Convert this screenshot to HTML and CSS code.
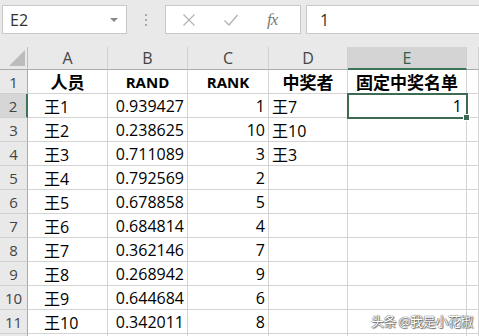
FILE: index.html
```html
<!DOCTYPE html>
<html>
<head>
<meta charset="utf-8">
<link rel="stylesheet" href="styles.css">
</head>
<body>
<div class="app">
  <div class="fbar">
    <div class="namebox"><span class="nb-text">E2</span><span class="nb-arrow"></span></div>
    <div class="dots"><i></i><i></i><i></i></div>
    <div class="btns">
      <svg class="ic-x" width="14" height="14" viewBox="0 0 14 14"><path d="M1.5 1.5 L12.5 12.5 M12.5 1.5 L1.5 12.5" stroke="#b4b4b4" stroke-width="1.3" fill="none"/></svg>
      <svg class="ic-ok" width="16" height="14" viewBox="0 0 16 14"><path d="M1.5 7.5 L6 12 L14.5 2" stroke="#b4b4b4" stroke-width="1.4" fill="none"/></svg>
      <span class="fx">fx</span>
    </div>
    <div class="formula">1</div>
  </div>
  <div class="sheet">
    <div class="corner"><span class="tri"></span></div>
    <div class="ch">A</div><div class="ch">B</div><div class="ch">C</div><div class="ch">D</div><div class="ch sel">E</div><div class="ch last"></div>

    <div class="rh">1</div>
    <div class="c hd zh">人员</div><div class="c hd">RAND</div><div class="c hd">RANK</div><div class="c hd zh">中奖者</div><div class="c hd zh">固定中奖名单</div><div class="c"></div>

    <div class="rh sel">2</div>
    <div class="c t">王1</div><div class="c n">0.939427</div><div class="c n">1</div><div class="c d">王7</div><div class="c n active">1</div><div class="c"></div>

    <div class="rh">3</div>
    <div class="c t">王2</div><div class="c n">0.238625</div><div class="c n">10</div><div class="c d">王10</div><div class="c"></div><div class="c"></div>

    <div class="rh">4</div>
    <div class="c t">王3</div><div class="c n">0.711089</div><div class="c n">3</div><div class="c d">王3</div><div class="c"></div><div class="c"></div>

    <div class="rh">5</div>
    <div class="c t">王4</div><div class="c n">0.792569</div><div class="c n">2</div><div class="c"></div><div class="c"></div><div class="c"></div>

    <div class="rh">6</div>
    <div class="c t">王5</div><div class="c n">0.678858</div><div class="c n">5</div><div class="c"></div><div class="c"></div><div class="c"></div>

    <div class="rh">7</div>
    <div class="c t">王6</div><div class="c n">0.684814</div><div class="c n">4</div><div class="c"></div><div class="c"></div><div class="c"></div>

    <div class="rh">8</div>
    <div class="c t">王7</div><div class="c n">0.362146</div><div class="c n">7</div><div class="c"></div><div class="c"></div><div class="c"></div>

    <div class="rh">9</div>
    <div class="c t">王8</div><div class="c n">0.268942</div><div class="c n">9</div><div class="c"></div><div class="c"></div><div class="c"></div>

    <div class="rh">10</div>
    <div class="c t">王9</div><div class="c n">0.644684</div><div class="c n">6</div><div class="c"></div><div class="c"></div><div class="c"></div>

    <div class="rh">11</div>
    <div class="c t">王10</div><div class="c n">0.342011</div><div class="c n">8</div><div class="c"></div><div class="c"></div><div class="c"></div>

    <div class="rh"></div>
    <div class="c"></div><div class="c"></div><div class="c"></div><div class="c"></div><div class="c"></div><div class="c"></div>
  </div>
  <div class="watermark">头条 @我是小花椒</div>
</div>
</body>
</html>
```

FILE: styles.css
```css
html, body {
  margin: 0;
  padding: 0;
  background: #ffffff;
}
body {
  font-family: "Open Sans", "Noto Sans CJK SC", sans-serif;
  color: #000;
  width: 479px;
  height: 336px;
  overflow: hidden;
}
.app {
  position: relative;
  width: 479px;
  height: 336px;
  overflow: hidden;
}
.fbar {
  height: 47px;
  background: #e9e9e9;
  display: flex;
  align-items: flex-start;
  padding-top: 5px;
  padding-left: 2px;
  box-sizing: border-box;
}
.namebox {
  width: 125px;
  height: 29px;
  box-sizing: border-box;
  border: 1px solid #c8c8c8;
  background: #fff;
  display: flex;
  align-items: center;
  padding-left: 7px;
  padding-right: 8px;
  justify-content: space-between;
}
.nb-text {
  font-size: 16px;
  color: #333;
}
.nb-arrow {
  width: 0;
  height: 0;
  border-left: 4px solid transparent;
  border-right: 4px solid transparent;
  border-top: 4px solid #888;
}
.dots {
  width: 38px;
  height: 29px;
  display: flex;
  flex-direction: column;
  align-items: center;
  justify-content: center;
  gap: 3px;
}
.dots i {
  display: block;
  width: 2px;
  height: 2px;
  background: #a9a9a9;
}
.btns {
  width: 136px;
  height: 29px;
  box-sizing: border-box;
  border: 1px solid #c8c8c8;
  background: #fff;
  display: flex;
  align-items: center;
  padding-left: 16px;
}
.ic-x { margin-right: 27px; }
.ic-ok { margin-right: 28px; }
.fx {
  font-family: "Liberation Serif", serif;
  font-style: italic;
  font-size: 17px;
  color: #7a7a7a;
  letter-spacing: -1px;
}
.formula {
  margin-left: 5px;
  flex: 1;
  height: 29px;
  box-sizing: border-box;
  border: 1px solid #c8c8c8;
  border-right: none;
  background: #fff;
  display: flex;
  align-items: center;
  padding-left: 13px;
  font-size: 16px;
  color: #333;
}
.sheet {
  display: grid;
  grid-template-columns: 28px 80px 80px 81px 79px 119px 12px;
  grid-template-rows: 23px repeat(12, 24px);
  font-size: 16px;
}
.corner {
  position: relative;
  background: #e9e9e9;
  border-right: 1px solid #bdbdbd;
  border-bottom: 1px solid #ababab;
  box-sizing: border-box;
}
.tri {
  position: absolute;
  right: 2px;
  bottom: 3px;
  width: 0;
  height: 0;
  border-left: 16px solid transparent;
  border-bottom: 16px solid #bcbcbc;
}
.ch {
  background: #e9e9e9;
  border-right: 1px solid #d0d0d0;
  border-bottom: 1px solid #ababab;
  box-sizing: border-box;
  display: flex;
  align-items: center;
  justify-content: center;
  color: #444;
  font-size: 16px;
}
.ch.sel {
  background: #d4d4d4;
  color: #2f6148;
  border-bottom: 2px solid #3d7458;
}
.rh {
  background: #e9e9e9;
  border-right: 1px solid #ababab;
  border-bottom: 1px solid #d0d0d0;
  box-sizing: border-box;
  display: flex;
  align-items: center;
  justify-content: center;
  color: #444;
  font-size: 15px;
}
.rh.sel {
  background: #d6d6d6;
  border-right: 2px solid #3d7458;
}
.c {
  border-right: 1px solid #d4d4d4;
  border-bottom: 1px solid #d4d4d4;
  box-sizing: border-box;
  display: flex;
  align-items: center;
  white-space: nowrap;
  background: #fff;
}
.c.hd {
  justify-content: center;
  font-weight: bold;
  font-size: 15px;
}
.c.hd.zh {
  font-size: 17px;
  font-family: "Noto Sans CJK SC", sans-serif;
}
.c.t {
  padding-left: 16px;
}
.c.d {
  padding-left: 3px;
}
.c.n {
  justify-content: flex-end;
  padding-right: 3px;
}
.c.active {
  position: relative;
  outline: 2px solid #3d6b52;
  outline-offset: -1px;
  padding-right: 4px;
}
.c.active::after {
  content: "";
  position: absolute;
  right: -4px;
  bottom: -4px;
  width: 5px;
  height: 5px;
  background: #3d6b52;
  border: 1px solid #fff;
  box-sizing: content-box;
}
.watermark {
  position: absolute;
  left: 371px;
  top: 311px;
  font-family: "Noto Sans CJK SC", sans-serif;
  font-size: 13px;
  color: #ffffff;
  text-shadow: 0 0 1px #444, 0 0 1px #444, 1px 1px 1px #777;
  letter-spacing: -0.5px;
}
```
